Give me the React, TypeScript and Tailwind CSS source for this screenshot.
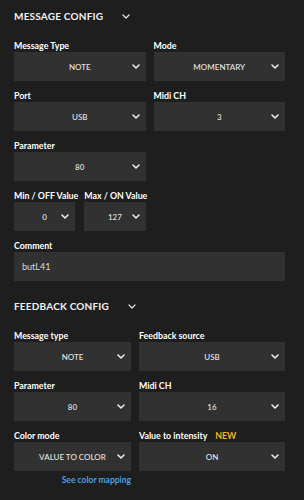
import React from 'react';

const font = { fontFamily: 'Lato, "Open Sans", sans-serif' };

function Chevron({ className = '' }: { className?: string }) {
  return (
    <svg width="8" height="5" viewBox="0 0 8 5" className={className}>
      <polyline points="1,1 4,4 7,1" fill="none" stroke="currentColor" strokeWidth="1.5" strokeLinecap="round" strokeLinejoin="round" />
    </svg>
  );
}

function Title({ text }: { text: string }) {
  return (
    <div className="h-[32px] flex items-center">
      <span className="text-[10px] font-bold tracking-[0.02em] text-[#f2f2f2]">{text}</span>
      <svg width="8" height="5" viewBox="0 0 8 5" className="ml-[19px] text-[#e8e8e8]">
        <polyline points="1,1 4,4 7,1" fill="none" stroke="currentColor" strokeWidth="1.2" strokeLinecap="round" strokeLinejoin="round" />
      </svg>
    </div>
  );
}

function Label({ children }: { children: React.ReactNode }) {
  return <div className="h-[12px] leading-[12px] text-[8.8px] font-bold text-white whitespace-nowrap">{children}</div>;
}

function Select({ value }: { value: string }) {
  return (
    <div className="relative h-[29px] bg-[#313131] flex items-center justify-center">
      <span className="text-[8px] font-semibold text-[#dedede] uppercase">{value}</span>
      <Chevron className="absolute right-[6px] top-[12px] text-[#f0f0f0]" />
    </div>
  );
}

function Field({ label, value }: { label: React.ReactNode; value: string }) {
  return (
    <div>
      <Label>{label}</Label>
      <Select value={value} />
    </div>
  );
}

export default function App() {
  return (
    <div className="w-[304px] h-[500px] bg-[#1e1e1e] px-[14px] pr-[19px] overflow-hidden" style={font}>
      <Title text="MESSAGE CONFIG" />
      <div className="mt-[8px] grid grid-cols-2 gap-x-[8px] gap-y-[9px]">
        <Field label="Message Type" value="NOTE" />
        <Field label="Mode" value="MOMENTARY" />
        <Field label="Port" value="USB" />
        <Field label="Midi CH" value="3" />
        <Field label="Parameter" value="80" />
        <div />
        <div className="grid grid-cols-2 gap-x-[9px]">
          <Field label="Min / OFF Value" value="0" />
          <Field label="Max / ON Value" value="127" />
        </div>
        <div />
        <div className="col-span-2">
          <Label>Comment</Label>
          <div className="h-[29px] bg-[#313131] flex items-center pl-[8px]">
            <span className="text-[9px] text-[#dcdcdc]">butL41</span>
          </div>
        </div>
      </div>

      <div className="mt-[9px]">
        <Title text="FEEDBACK CONFIG" />
      </div>
      <div className="mt-[8px] grid grid-cols-[117px_1fr] gap-x-[8px] gap-y-[9px]">
        <Field label="Message type" value="NOTE" />
        <Field label="Feedback source" value="USB" />
        <Field label="Parameter" value="80" />
        <Field label="Midi CH" value="16" />
        <div>
          <Field label="Color mode" value="VALUE TO COLOR" />
          <div className="mt-[3px] text-right text-[8.5px] font-bold text-[#4a9fe0]">See color mapping</div>
        </div>
        <Field
          label={
            <>
              Value to intensity <span className="ml-[6px] text-[#f4b428]">NEW</span>
            </>
          }
          value="ON"
        />
      </div>
    </div>
  );
}
